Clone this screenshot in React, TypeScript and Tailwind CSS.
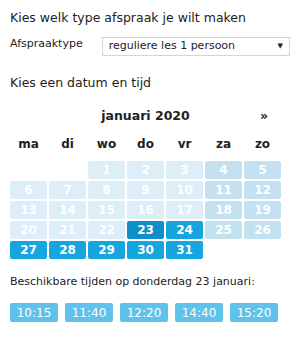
import React from 'react';

const weekdays = ['ma', 'di', 'wo', 'do', 'vr', 'za', 'zo'];

type Day = { n: number; kind: 'past' | 'weekend' | 'open' | 'selected' };

// januari 2020 begint op woensdag
const days: Day[] = Array.from({ length: 31 }, (_, i) => {
  const n = i + 1;
  const col = (i + 2) % 7;
  if (n === 23) return { n, kind: 'selected' };
  if (n === 24 || n >= 27) return { n, kind: 'open' };
  if (col >= 5) return { n, kind: 'weekend' };
  return { n, kind: 'past' };
});

const times = ['10:15', '11:40', '12:20', '14:40', '15:20'];

const cellClass: Record<Day['kind'], string> = {
  past: 'bg-[#ddeef8] text-white',
  weekend: 'bg-[#c3e1f1] text-white',
  open: 'bg-[#16a5df] text-white',
  selected: 'bg-[#0f8fca] text-white',
};

export default function App() {
  return (
    <div className="w-[300px] h-[339px] bg-white px-[10px] text-[#222] font-['DejaVu_Sans',sans-serif]">
      {/* Type afspraak */}
      <h2 className="pt-[10px] text-[12.5px] leading-[16px]">Kies welk type afspraak je wilt maken</h2>
      <div className="mt-[11px] flex items-center">
        <label className="w-[92px] text-[11px] leading-[14px] -mt-[6px]">Afspraaktype</label>
        <div className="flex h-[19px] w-[189px] items-center justify-between border border-[#d4d4d4] bg-white pl-[6px] pr-[6px] text-[11px]">
          <span>reguliere les 1 persoon</span>
          <span className="text-[7px]">▼</span>
        </div>
      </div>

      {/* Datum en tijd */}
      <h2 className="mt-[19px] text-[12.5px] leading-[16px]">Kies een datum en tijd</h2>

      <div className="mt-[17px] grid w-[271px] grid-cols-7 gap-x-[2px] gap-y-[2px]">
        <div className="col-span-7 relative h-[16px] text-center text-[12.5px] font-bold leading-[16px]">
          januari 2020
          <span className="absolute right-[13px] top-0">»</span>
        </div>
        <div className="col-span-7 mt-[10px] mb-[7px] grid grid-cols-7 gap-x-[2px]">
          {weekdays.map((d) => (
            <div key={d} className="text-center text-[12px] font-bold leading-[16px]">
              {d}
            </div>
          ))}
        </div>
        <div className="col-span-2" />
        {days.map((d) => (
          <div
            key={d.n}
            className={`flex h-[18px] items-center justify-center rounded-[2px] text-[12px] font-bold ${cellClass[d.kind]}`}
          >
            {d.n}
          </div>
        ))}
      </div>

      {/* Tijden */}
      <p className="mt-[16px] text-[11px] leading-[14px]">Beschikbare tijden op donderdag 23 januari:</p>
      <div className="mt-[14px] flex gap-[7px]">
        {times.map((t) => (
          <div
            key={t}
            className="flex h-[19px] w-[48px] items-center justify-center rounded-[2px] bg-[#5ec2ea] text-[12px] text-white"
          >
            {t}
          </div>
        ))}
      </div>
    </div>
  );
}
